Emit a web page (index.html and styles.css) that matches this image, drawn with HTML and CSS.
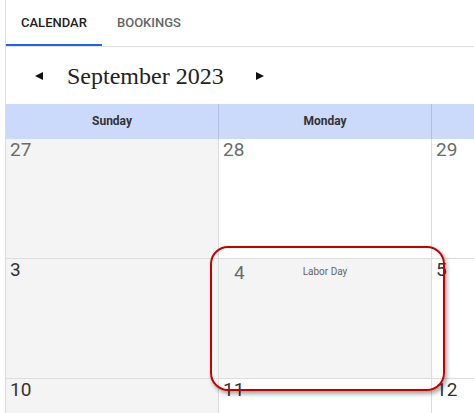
FILE: index.html
```html
<!DOCTYPE html>
<html lang="en">
<head>
  <meta charset="UTF-8" />
  <title>Calendar</title>
  <link rel="stylesheet" href="styles.css">
</head>
<body>
  <div class="app">
    <!-- Tabs -->
    <div class="tabs">
      <div class="tab active">Calendar</div>
      <div class="tab">Bookings</div>
    </div>

    <!-- Month switcher -->
    <div class="month-bar">
      <span class="arrow left"></span>
      <span class="month-title">September 2023</span>
      <span class="arrow right"></span>
    </div>

    <!-- Grid -->
    <div class="calendar">
      <div class="day-name">Sunday</div>
      <div class="day-name">Monday</div>
      <div class="day-name"></div>

      <div class="cell gray other"><span class="num">27</span></div>
      <div class="cell other"><span class="num">28</span></div>
      <div class="cell other"><span class="num">29</span></div>

      <div class="cell gray"><span class="num">3</span></div>
      <div class="cell gray holiday">
        <span class="num">4</span>
        <span class="holiday-name">Labor Day</span>
      </div>
      <div class="cell"><span class="num">5</span></div>

      <div class="cell gray"><span class="num">10</span></div>
      <div class="cell"><span class="num">11</span></div>
      <div class="cell"><span class="num">12</span></div>
    </div>

    <!-- Highlight around the holiday -->
    <div class="highlight"></div>
  </div>
</body>
</html>
```

FILE: styles.css
```css
:root {
  --border-color: #dddddd;
  --header-blue: #cbdafb;
  --cell-gray: #f4f4f4;
  --tab-blue: #1a66e6;
}

* {
  box-sizing: border-box;
}

html,
body {
  margin: 0;
  height: 100%;
  overflow: hidden;
  background: #ffffff;
}

body {
  font-family: Roboto, 'Liberation Sans', sans-serif;
}

.app {
  position: relative;
  margin-left: 5px;
  min-height: 100%;
  border-left: 1px solid var(--border-color);
}

/* Tabs */
.tabs {
  display: flex;
  height: 47px;
  border-bottom: 1px solid #e0e0e0;
}

.tab {
  padding: 0 15px;
  height: 46px;
  line-height: 46px;
  font-size: 13px;
  font-weight: 500;
  text-transform: uppercase;
  color: #666;
  border-bottom: 2px solid transparent;
}

.tab.active {
  width: 96px;
  color: #222;
  border-bottom-color: var(--tab-blue);
}

/* Month bar */
.month-bar {
  display: flex;
  align-items: center;
  height: 57px;
  padding-left: 29px;
}

.month-title {
  font-family: 'Liberation Serif', serif;
  font-size: 24px;
  color: #222;
  margin: 0 32px 0 24px;
  position: relative;
  top: 1px;
}

.arrow {
  width: 0;
  height: 0;
  border-top: 4px solid transparent;
  border-bottom: 4px solid transparent;
}

.arrow.left {
  border-right: 8px solid #111;
}

.arrow.right {
  border-left: 8px solid #111;
}

/* Calendar grid */
.calendar {
  display: grid;
  grid-template-columns: repeat(3, 213px);
  grid-template-rows: 35px repeat(3, 120px);
  width: 639px;
}

.day-name {
  background: var(--header-blue);
  border-right: 1px solid #aebfe3;
  font-size: 12px;
  font-weight: 700;
  color: #333;
  text-align: center;
  line-height: 35px;
}

.cell {
  position: relative;
  border-right: 1px solid var(--border-color);
  border-bottom: 1px solid var(--border-color);
  padding: 0 4px;
}

.cell.gray {
  background: var(--cell-gray);
}

.num {
  font-size: 19px;
  line-height: 22px;
  color: #333;
}

.cell.other .num {
  color: #6b6b6b;
}

.cell.holiday {
  display: flex;
  padding: 3px 15px 0;
}

.holiday .num {
  color: #6b6b6b;
}

.holiday-name {
  position: absolute;
  left: 0;
  right: 0;
  top: 7px;
  text-align: center;
  font-size: 10px;
  color: #666;
}

/* Red annotation */
.highlight {
  position: absolute;
  left: 204px;
  top: 246px;
  width: 235px;
  height: 145px;
  border: 2px solid #c40000;
  border-radius: 18px;
  box-shadow: 2px 3px 4px rgba(0, 0, 0, 0.35);
}
```
